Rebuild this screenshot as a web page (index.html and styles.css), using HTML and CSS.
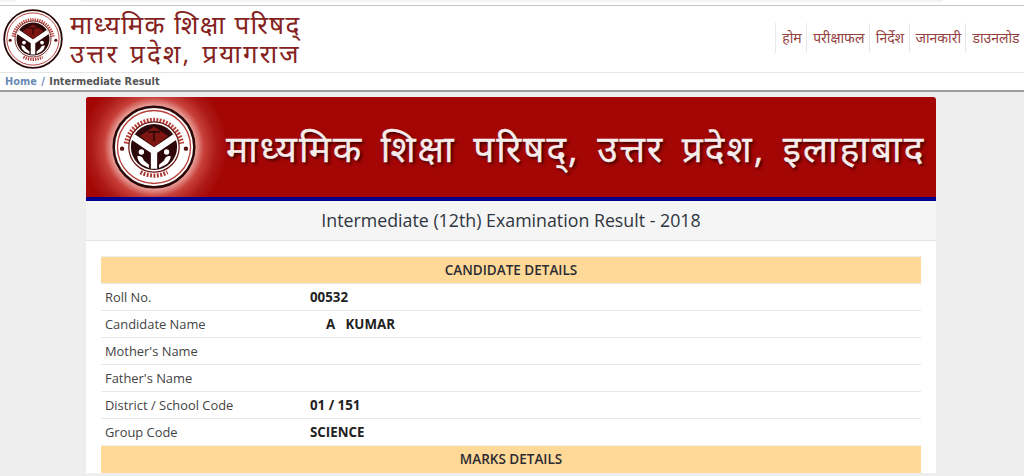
FILE: index.html
```html
<!DOCTYPE html>
<html lang="hi">
<head>
<meta charset="utf-8">
<title>Intermediate Result</title>
<link rel="stylesheet" href="styles.css">
</head>
<body>
<svg class="defs" aria-hidden="true">
  <symbol id="emblem" viewBox="0 0 100 100">
    <circle cx="50" cy="50" r="48" fill="#fff" stroke="#2b0909" stroke-width="3"/>
    <circle cx="50" cy="50" r="43.500" fill="none" stroke="#b8403a" stroke-width="1.600"/>
    <path d="M17 46 A33.500 33.500 0 0 1 83 46" fill="none" stroke="#b8403a" stroke-width="6" stroke-dasharray="2.200 1.600"/>
    <path d="M34 80 A34 34 0 0 0 66 80" fill="none" stroke="#a8322e" stroke-width="5" stroke-dasharray="2.200 1.800"/>
    <circle cx="12" cy="52" r="2.600" fill="#5a1210"/>
    <circle cx="88" cy="52" r="2.600" fill="#5a1210"/>
    <circle cx="50" cy="50" r="30" fill="#fff" stroke="#6d1512" stroke-width="1.500"/>
    <circle cx="50" cy="50" r="27.500" fill="#2e0808"/>
    <path d="M33 37 L50 26 L67 37 L58 44 L50 50 L42 44 Z" fill="#7d1512"/>
    <path d="M50 31 V43 M43 32 H57" fill="none" stroke="#2e0808" stroke-width="2"/>
    <path d="M25 38 L50 55 L75 38 M50 55 V76" fill="none" stroke="#fff" stroke-width="7.500"/>
    <circle cx="35" cy="56" r="3.200" fill="#fff"/>
    <circle cx="65" cy="56" r="3.200" fill="#fff"/>
    <path d="M30 61 Q36 60 38 66 L44 71 V75 L36 71 Q31 68 30 61 Z" fill="#fff"/>
    <path d="M70 61 Q64 60 62 66 L56 71 V75 L64 71 Q69 68 70 61 Z" fill="#fff"/>
  </symbol>
</svg>
<div class="topstrip"><div class="strip-pill small"></div><div class="strip-pill wide"></div></div>
<header class="site-header">
  <div class="brand">
    <svg class="seal" aria-hidden="true"><use href="#emblem"/></svg>
    <div class="brand-text">
      <div class="brand-line">माध्यमिक शिक्षा परिषद्</div>
      <div class="brand-line second">उत्तर प्रदेश, प्रयागराज</div>
    </div>
  </div>
  <nav class="main-nav">
    <a>होम</a><a>परीक्षाफल</a><a>निर्देश</a><a>जानकारी</a><a>डाउनलोड</a>
  </nav>
</header>
<div class="breadcrumb"><a>Home</a> <span class="sep">/</span> <span class="crumb">Intermediate Result</span></div>
<main class="panel">
  <div class="banner">
    <div class="halo">
      <svg class="banner-seal" aria-hidden="true"><use href="#emblem"/></svg>
    </div>
    <div class="banner-title">माध्यमिक शिक्षा परिषद्, उत्तर प्रदेश, इलाहाबाद</div>
  </div>
  <h1 class="panel-heading">Intermediate (12th) Examination Result - 2018</h1>
  <div class="panel-body">
    <table class="result">
      <tr class="band"><th colspan="2">CANDIDATE DETAILS</th></tr>
      <tr><td class="label">Roll No.</td><td class="value">00532</td></tr>
      <tr><td class="label">Candidate Name</td><td class="value name">A &nbsp;&nbsp;KUMAR</td></tr>
      <tr><td class="label">Mother's Name</td><td class="value"></td></tr>
      <tr><td class="label">Father's Name</td><td class="value"></td></tr>
      <tr><td class="label">District / School Code</td><td class="value">01 / 151</td></tr>
      <tr><td class="label">Group Code</td><td class="value">SCIENCE</td></tr>
      <tr class="band"><th colspan="2">MARKS DETAILS</th></tr>
    </table>
  </div>
</main>
</body>
</html>
```
FILE: styles.css
```css
* { box-sizing: border-box; }
html, body { margin: 0; padding: 0; height: 476px; overflow: hidden; }
body { background: #eeeeee; font-family: "Open Sans", "Noto Sans", "Noto Sans Devanagari", "Lohit Devanagari", sans-serif; color: #333; }
.defs { position: absolute; width: 0; height: 0; }
.topstrip { height: 6px; background: #fff; border-bottom: 1px solid #c4c4c4; display: flex; align-items: flex-start; }
.strip-pill { height: 2px; background: #f3f3f3; border-radius: 0 0 4px 4px; }
.strip-pill.small { width: 16px; }
.strip-pill.wide { width: 863px; margin-left: 64px; }
.site-header { height: 67px; background: #fff; border-bottom: 1px solid #e6e6e6; display: flex; justify-content: space-between; align-items: center; }
.brand { display: flex; align-items: center; gap: 7px; padding-left: 3px; }
.seal { width: 60px; height: 60px; flex: none; }
.brand-text { color: #842220; font-size: 26px; line-height: 29px; letter-spacing: 1.300px; white-space: nowrap; }
.brand-line.second { letter-spacing: 2.100px; word-spacing: 2px; }
.main-nav { display: flex; align-items: center; height: 31px; margin-top: -3px; }
.main-nav a { color: #93413f; font-size: 14px; line-height: 30px; padding: 0 4.400px 0 6px; border-left: 1px solid #e8e8e8; white-space: nowrap; }
.breadcrumb { height: 19px; background: #fff; border-bottom: 2px solid #9c9c9c; padding-left: 5px; font-family: "DejaVu Sans", sans-serif; font-size: 9.800px; font-weight: 700; line-height: 18px; color: #555; }
.breadcrumb a { color: #6a8ab4; }
.breadcrumb .sep { color: #6a8ab4; margin: 0 1px; }
.panel { width: 850px; margin: 5px 0 0 86px; background: #fff; border-radius: 3px 3px 0 0; }
.banner { height: 104px; background: #a30604; border-bottom: 4px solid #00008f; border-radius: 3px 3px 0 0; display: flex; align-items: center; overflow: hidden; }
.halo { width: 140px; height: 100px; flex: none; display: flex; align-items: center; justify-content: center; background: radial-gradient(circle at 68px 50px, #efb0aa 40px, #c8403a 50px, #ad1a18 62px, #a30604 74px); }
.banner-seal { width: 84px; height: 84px; margin-left: -4px; }
.banner-title { color: #f7ecec; font-size: 37px; letter-spacing: 2px; word-spacing: 6px; white-space: nowrap; text-shadow: 2px 2px 3px #3a0000; -webkit-text-stroke: 0.300px #f7ecec; }
.panel-heading { margin: 0; height: 40px; background: #f5f5f5; border-bottom: 1px solid #e4e4e4; font-size: 17.800px; font-weight: 400; line-height: 38px; text-align: center; color: #2f3640; }
.panel-body { padding: 15px 15px 0; }
.result { width: 100%; border-collapse: collapse; font-size: 12.900px; }
.result th { background: #ffd997; height: 27px; padding: 0; font-size: 13.500px; font-weight: 600; text-align: center; border-top: 1px solid #eeeeee; color: #2b2b33; }
.result td { height: 27px; padding: 0 4px; border-top: 1px solid #e8e8e8; }
.result .label { width: 206px; color: #444; }
.result .value { font-size: 13.300px; font-weight: 700; color: #222; padding-left: 3px; }
.result .name { padding-left: 19px; }
```
